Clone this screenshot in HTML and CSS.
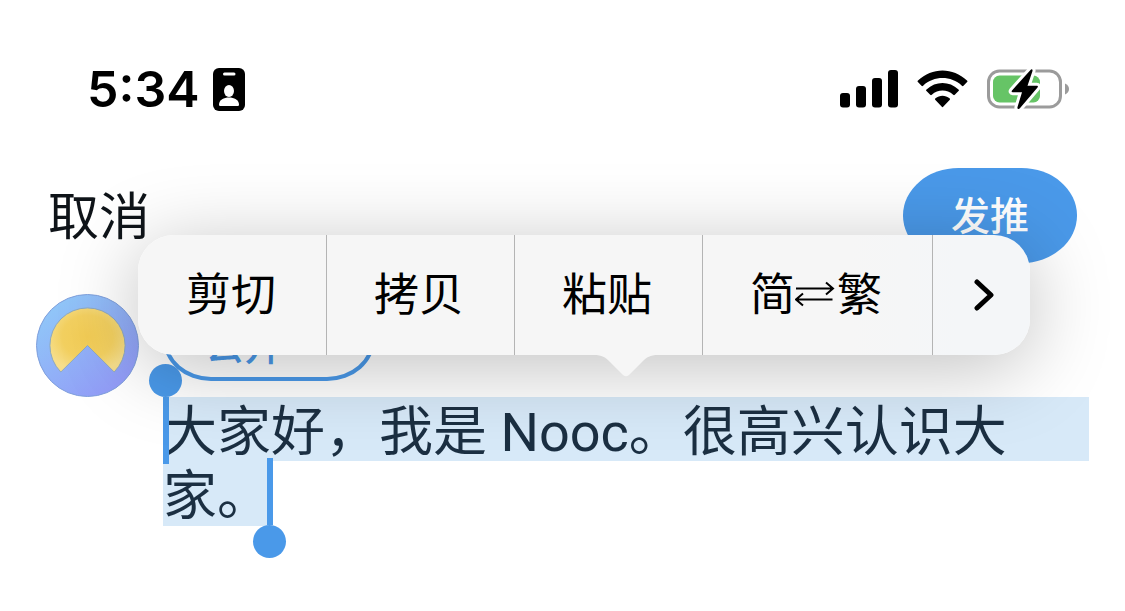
FILE: index.html
```html
<!DOCTYPE html>
<html lang="zh-CN">
<head>
<meta charset="utf-8">
<meta name="viewport" content="width=device-width, initial-scale=1">
<title>发推</title>
<link rel="stylesheet" href="styles.css">
</head>
<body>
<header class="status">
  <div class="status-left">
    <time class="clock">5:34</time>
    <svg class="icon-badge" viewBox="0 0 32 43" role="img" aria-label="Focus">
      <rect width="32" height="43" rx="6"/>
      <rect x="10" y="4.500" width="12.500" height="3" rx="1.500" fill="#fff"/>
      <ellipse cx="16" cy="23" rx="5" ry="6" fill="#fff"/>
      <path d="M6 36.500C6 32 11 29.500 16 29.500s10 2.500 10 7c0 1-.6 1.500-1.500 1.500h-17C6.600 38 6 37.500 6 36.500z" fill="#fff"/>
    </svg>
  </div>
  <div class="status-right">
    <svg class="icon-signal" viewBox="0 0 58 38" role="img" aria-label="Signal">
      <rect x="0" y="23" width="10" height="14.500" rx="3"/>
      <rect x="16" y="16" width="10" height="21.500" rx="3"/>
      <rect x="32" y="8" width="10" height="29.500" rx="3"/>
      <rect x="48" y="0" width="10" height="37.500" rx="3"/>
    </svg>
    <svg class="icon-wifi" viewBox="0 0 51 38" role="img" aria-label="Wi-Fi">
      <path d="M1 10.500C15-3 36-3 50 10.500c.7.700.7 1 .1 1.600L46.500 15.700c-.6.600-1 .6-1.600 0C34 5.500 17 5.500 6.100 15.700c-.6.600-1 .6-1.600 0L.9 12.100c-.6-.6-.6-.9.1-1.600z"/>
      <path d="M9.500 19.500c9.200-8.600 22.800-8.600 32 0 .6.600.6 1 0 1.600l-3.700 3.600c-.6.600-1 .6-1.600 0-6.300-5.600-15.100-5.600-21.400 0-.6.600-1 .6-1.600 0l-3.700-3.600c-.6-.6-.6-1 0-1.600z"/>
      <path d="M18.500 28.300c4.100-3.500 9.900-3.500 14 0 .7.600.7 1.100.1 1.700l-6.200 6.600c-.6.700-1.200.7-1.800 0L18.400 30c-.6-.6-.6-1.100.1-1.700z"/>
    </svg>
    <svg class="icon-battery" viewBox="0 0 82 44" role="img" aria-label="Battery charging">
      <rect x="1.500" y="4" width="72" height="36" rx="11" fill="none" stroke="#9b9b9b" stroke-width="3"/>
      <path d="M78 16.500c2.600 1 4 3.200 4 5.500s-1.400 4.500-4 5.500z" fill="#9b9b9b"/>
      <rect x="6" y="8.500" width="47" height="27" rx="6.500" fill="#66c466"/>
      <path d="M43.500 3 25 23.500c-.7.900-.4 1.700.7 1.700H35L30.500 40c-.5 2 1.200 2.600 2.400 1.200L50.500 20.500c.8-1 .4-1.800-.8-1.800H40.500L45.500 4c.4-1.600-.9-2.200-2-1z" stroke="#fff" stroke-width="6" stroke-linejoin="round" paint-order="stroke"/>
    </svg>
  </div>
</header>

<main class="composer">
  <div class="toolbar">
    <button class="cancel" type="button">取消</button>
    <button class="send" type="button">发推</button>
  </div>

  <div class="draft">
    <svg class="avatar" viewBox="0 0 103 103" role="img" aria-label="Nooc">
      <defs>
        <linearGradient id="sky" x1="0.100" y1="0.100" x2="0.800" y2="0.950">
          <stop offset="0" stop-color="#90c8f8"/>
          <stop offset="1" stop-color="#929af7"/>
        </linearGradient>
        <radialGradient id="sun" cx="0.500" cy="0.450" r="0.560">
          <stop offset="0" stop-color="#f2cc55"/>
          <stop offset="0.600" stop-color="#f3d060"/>
          <stop offset="1" stop-color="#f6de8b"/>
        </radialGradient>
      </defs>
      <circle cx="51.500" cy="51.500" r="51" fill="url(#sky)" stroke="#7f9fdc" stroke-width="1"/>
      <path d="M51.500 51.500 78.200 78A37.600 37.600 0 1 0 24.800 78z" fill="url(#sun)" stroke="#8fa9bd" stroke-width="1"/>
    </svg>
    <div class="draft-body">
      <button class="audience" type="button">公开
        <svg class="icon-down" viewBox="0 0 18 12" aria-hidden="true"><path d="M2 2l7 7 7-7"/></svg>
      </button>
      <div class="editor">
        <textarea class="draft-text" rows="2" aria-label="推文" spellcheck="false">大家好，我是 Nooc。很高兴认识大家。</textarea>
        <span class="handle handle-start"></span>
        <span class="handle handle-end"></span>
      </div>
    </div>
  </div>

  <div class="edit-menu" role="menu">
    <button class="edit-item" role="menuitem" type="button">剪切</button>
    <button class="edit-item" role="menuitem" type="button">拷贝</button>
    <button class="edit-item" role="menuitem" type="button">粘贴</button>
    <button class="edit-item" role="menuitem" type="button">简<svg class="icon-swap" viewBox="0 0 42 28" aria-hidden="true"><path d="M1 7.500H37.500M31 1.500L38 7.500L31 13.500M37.500 18.500H1M8 12.500L1 18.500L8 24.500"/></svg>繁</button>
    <button class="edit-item edit-more" role="menuitem" type="button" aria-label="更多">
      <svg class="icon-next" viewBox="0 0 20 32" aria-hidden="true"><path d="M3 3l14 13L3 29"/></svg>
    </button>
    <svg class="edit-arrow" viewBox="0 0 64 23" aria-hidden="true"><path d="M0 0V1C8 1 11 3 16 8L29 21Q32 23.500 35 21L48 8C53 3 56 1 64 1V0z"/></svg>
  </div>
</main>
</body>
</html>
```

FILE: styles.css
```css
* {
  box-sizing: border-box;
}

body {
  margin: 0;
  background: #fff;
  color: #0f1419;
  font-family: Inter, "Noto Sans CJK SC", sans-serif;
}

button {
  margin: 0;
  padding: 0;
  border: 0;
  background: none;
  color: inherit;
  font: inherit;
}

svg {
  display: block;
  flex: none;
}

.status {
  display: flex;
  justify-content: space-between;
  align-items: center;
  height: 168px;
  padding: 10px 56px 0 87px;
  color: #000;
}

.status-left {
  display: flex;
  align-items: center;
  gap: 13px;
}

.clock {
  font-size: 50px;
  line-height: 60px;
  font-weight: 600;
}

.icon-badge {
  width: 32px;
  height: 43px;
}

.status-right {
  display: flex;
  align-items: center;
  gap: 19px;
}

.icon-signal {
  width: 58px;
  height: 38px;
}

.icon-wifi {
  width: 51px;
  height: 38px;
}

.icon-battery {
  width: 82px;
  height: 44px;
}

.composer {
  position: relative;
}

.toolbar {
  display: flex;
  justify-content: space-between;
  align-items: center;
  padding: 0 48px;
}

.cancel {
  padding-top: 2px;
  font-size: 51px;
  line-height: 64px;
}

.send {
  padding: 0 48px;
  border-radius: 56px / 48px;
  background: #4a99e9;
  color: #fff;
  font-size: 39px;
  font-weight: 500;
  line-height: 95px;
}

.draft {
  display: flex;
  gap: 24px;
  padding: 31px 36px 36px;
}

.avatar {
  width: 103px;
  height: 103px;
}

.draft-body {
  display: flex;
  flex: 1;
  flex-direction: column;
  align-items: flex-start;
  gap: 16px;
  padding-top: 3px;
}

.audience {
  display: flex;
  align-items: center;
  gap: 12px;
  height: 84px;
  padding: 14px 58px 0 38px;
  border: 4px solid #4a99e9;
  border-radius: 48px / 42px;
  color: #4a99e9;
  font-size: 39px;
  font-weight: 500;
  line-height: 48px;
}

.icon-down {
  width: 18px;
  height: 12px;
  fill: none;
  stroke: currentColor;
  stroke-width: 4px;
}

.editor {
  position: relative;
  width: 100%;
}

.draft-text {
  display: block;
  width: 100%;
  height: 129px;
  margin: 0;
  padding: 4px 0 0;
  border: 0;
  outline: 0;
  resize: none;
  overflow: hidden;
  background:
    linear-gradient(#d7e9f8, #d7e9f8) 0 0 / 100% 64px no-repeat,
    linear-gradient(#d7e9f8, #d7e9f8) 0 64px / 107px 65px no-repeat;
  color: #1b2f42;
  font: 54px/64px Roboto, "Noto Sans CJK SC", sans-serif;
}

.handle {
  position: absolute;
  width: 6px;
  height: 67px;
  background: #4a99e9;
}

.handle::after {
  content: "";
  position: absolute;
  left: -14px;
  width: 33px;
  height: 33px;
  border-radius: 50%;
  background: #4a99e9;
}

.handle-start {
  top: 0;
  left: 0;
}

.handle-start::after {
  bottom: 100%;
}

.handle-end {
  top: 61px;
  left: 104px;
}

.handle-end::after {
  top: 100%;
}

.edit-menu {
  position: absolute;
  top: 67px;
  left: 138px;
  display: flex;
  height: 120px;
  border-radius: 36px;
  background: linear-gradient(90deg, #f6f6f6 80%, #f4f6f8 92%);
  box-shadow: 0 12px 80px rgba(0, 0, 0, 0.250);
  color: #000;
  font-size: 45px;
  line-height: 60px;
}

.edit-item {
  display: flex;
  align-items: center;
  padding: 0 50px 0 47px;
  border-left: 1px solid #b4b4b4;
}

.edit-item:first-child {
  border-left-color: transparent;
}

.edit-more {
  padding: 0 36px 0 41px;
}

.icon-swap {
  width: 42px;
  height: 28px;
  fill: none;
  stroke: currentColor;
  stroke-width: 2px;
}

.icon-next {
  width: 20px;
  height: 32px;
  fill: none;
  stroke: currentColor;
  stroke-width: 5px;
  stroke-linecap: round;
  stroke-linejoin: round;
}

.edit-arrow {
  position: absolute;
  top: 119px;
  left: 456px;
  width: 64px;
  height: 23px;
  fill: #f6f6f6;
}
```
